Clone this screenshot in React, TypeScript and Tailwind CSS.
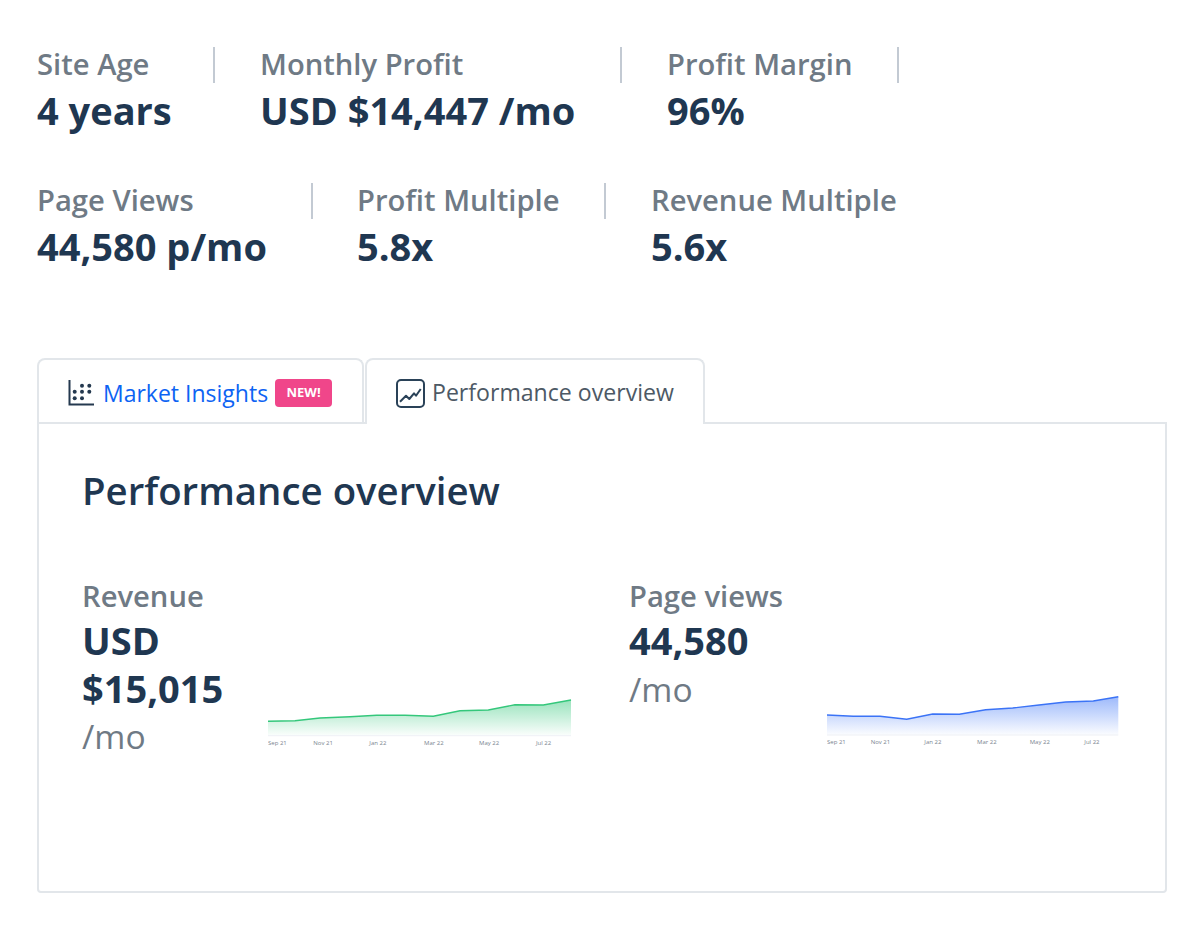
import React from "react";

type StatItem = { label: string; value: string; width: string; last?: boolean };

const topStats: StatItem[] = [
  { label: "Site Age", value: "4 years", width: "w-[178px]" },
  { label: "Monthly Profit", value: "USD $14,447 /mo", width: "w-[362px]" },
  { label: "Profit Margin", value: "96%", width: "w-[232px]" },
];

const bottomStats: StatItem[] = [
  { label: "Page Views", value: "44,580 p/mo", width: "w-[276px]" },
  { label: "Profit Multiple", value: "5.8x", width: "w-[249px]" },
  { label: "Revenue Multiple", value: "5.6x", width: "ml-[1px] w-[260px]", last: true },
];

const Stat = ({ label, value, width, last }: StatItem) => (
  <div className={`flex flex-col ${width}`}>
    <div className={`h-[36px] pb-[1px] flex items-center text-[29.2px] font-semibold text-[#6f7a85] leading-none whitespace-nowrap ${last ? "" : "border-r-2 border-[#c3cad3]"}`}>
      {label}
    </div>
    <div className="mt-[4px] text-[38px] font-bold text-[#1f3751] leading-[46px] whitespace-nowrap">{value}</div>
  </div>
);

const StatRow = ({ items, gap }: { items: StatItem[]; gap: string }) => (
  <div className={`flex ${gap}`}>
    {items.map((item) => (
      <Stat key={item.label} {...item} />
    ))}
  </div>
);

const InsightsIcon = () => (
  <svg width="26" height="26" viewBox="0 0 26 26" className="shrink-0 text-[#24394f]">
    <path d="M1.5 0v24.5H26" fill="none" stroke="currentColor" strokeWidth="2" />
    {[
      [14, 5.7], [21.3, 5.7],
      [6.7, 11.7], [14, 11.7], [21.3, 11.7],
      [6.7, 18.3], [14, 18.3],
    ].map(([cx, cy]) => (
      <circle key={`${cx}-${cy}`} cx={cx} cy={cy} r="2" fill="currentColor" />
    ))}
  </svg>
);

const TrendIcon = () => (
  <svg width="29" height="29" viewBox="0 0 29 29" className="shrink-0 text-[#2a4258]" fill="none">
    <rect x="1" y="1" width="27" height="27" rx="4" stroke="currentColor" strokeWidth="2" />
    <path d="M4 22.7l6-6 3.3 3.3 4.7-5.7 2 2.4 4.7-6.7" stroke="currentColor" strokeWidth="2" strokeLinejoin="round" />
  </svg>
);

type ChartProps = {
  id: string;
  color: string;
  width: number;
  baseline: number;
  points: number[][];
  labels: number[][];
};

const names = ["Sep 21", "Nov 21", "Jan 22", "Mar 22", "May 22", "Jul 22"];

const AreaChart = ({ id, color, width, baseline, points, labels }: ChartProps) => {
  const line = points.map(([x, y]) => `${x},${y}`).join(" ");
  const last = points[points.length - 1][0];
  return (
    <svg width={width} height="56" viewBox={`0 0 ${width} 56`} className="shrink-0">
      <defs>
        <linearGradient id={id} x1="0" y1="0" x2="0" y2="1">
          <stop offset="0" stopColor={color} stopOpacity="0.5" />
          <stop offset="1" stopColor={color} stopOpacity="0.02" />
        </linearGradient>
      </defs>
      <polygon points={`0,${baseline} ${line} ${last},${baseline}`} fill={`url(#${id})`} />
      <line x1="0" y1={baseline} x2={last} y2={baseline} stroke="#eef0f5" strokeWidth="1" />
      <polyline points={line} fill="none" stroke={color} strokeWidth="1.4" />
      {names.map((name, i) => (
        <text key={name} x={labels[i][0]} y={labels[i][1]} fontSize="6" fill="#7a8590">
          {name}
        </text>
      ))}
    </svg>
  );
};

const greenPoints = [
  [0, 26.3], [27, 25.7], [52, 23], [82, 21.7], [108.7, 20.3], [137, 20.3], [165.3, 21.3],
  [192, 15.7], [220.3, 15], [247, 9.7], [275.3, 10], [303, 5],
];
const greenLabels = [[0, 49.7], [45.3, 49.7], [101.3, 49.7], [156, 49.7], [211, 49.7], [268, 49.7]];

const bluePoints = [
  [0, 19], [26.3, 20.3], [53, 20.3], [79.7, 23.3], [105.7, 18], [132.3, 18.3], [158.7, 13.7],
  [185.7, 12], [212, 9], [238.7, 6], [266.3, 5], [291.3, 0.7],
];
const blueLabels = [[0, 48], [43.7, 48], [97.3, 48], [150, 48], [202.7, 48], [257.3, 48]];

export default function App() {
  return (
    <div className="w-[1200px] h-[948px] bg-white pl-[37px] pt-[47px] font-['Open_Sans',sans-serif]">
      <div className="flex flex-col gap-[50px]">
        <StatRow items={topStats} gap="gap-[45px]" />
        <StatRow items={bottomStats} gap="gap-[44px]" />
      </div>

      <div className="mt-[89px] w-[1130px]">
        <div className="flex gap-px h-[64px]">
          <div className="w-[327px] border-2 border-b-0 border-[#e2e6ea] rounded-t-[8px] flex items-center pl-[29px] pt-[4px] gap-[9px] bg-white">
            <InsightsIcon />
            <span className="text-[23px] text-[#0d63f3] leading-none">Market Insights</span>
            <span className="ml-[-2px] w-[57px] h-[28px] rounded-[4px] bg-[#f0468a] text-white text-[13px] font-bold flex items-center justify-center">NEW!</span>
          </div>
          <div className="relative z-10 w-[340px] h-[66px] border-2 border-b-0 border-[#e2e6ea] rounded-t-[8px] flex items-center pl-[29px] pt-[2px] gap-[7px] bg-white">
            <TrendIcon />
            <span className="text-[23.1px] text-[#4d5965] leading-none">Performance overview</span>
          </div>
        </div>
        <div className="h-[471px] border-2 border-[#e2e6ea] rounded-b-[4px] pl-[43px] pt-[40px]">
          <h2 className="text-[38.4px] font-semibold text-[#1f3751] leading-[52px]">Performance overview</h2>
          <div className="flex mt-[61px]">
            <div className="w-[547px] flex items-end">
              <div className="w-[186px] shrink-0">
                <div className="text-[29.2px] font-semibold text-[#6f7a85] leading-[38px]">Revenue</div>
                <div className="mt-[1px] text-[38px] font-bold text-[#1f3751] leading-[48px] w-[160px]">USD $15,015</div>
                <div className="text-[33.6px] text-[#6f7a85] leading-[48px]">/mo</div>
              </div>
              <div className="mb-[9px]">
                <AreaChart id="greenFill" color="#34c77b" width={304} baseline={40.7} points={greenPoints} labels={greenLabels} />
              </div>
            </div>
            <div className="flex items-start">
              <div className="w-[198px] shrink-0">
                <div className="text-[29.2px] font-semibold text-[#6f7a85] leading-[38px]">Page views</div>
                <div className="mt-[1px] text-[38px] font-bold text-[#1f3751] leading-[48px]">44,580</div>
                <div className="mt-[1px] text-[33.6px] text-[#6f7a85] leading-[48px]">/mo</div>
              </div>
              <div className="mt-[119px]">
                <AreaChart id="blueFill" color="#3b73f6" width={292} baseline={39} points={bluePoints} labels={blueLabels} />
              </div>
            </div>
          </div>
        </div>
      </div>
    </div>
  );
}
